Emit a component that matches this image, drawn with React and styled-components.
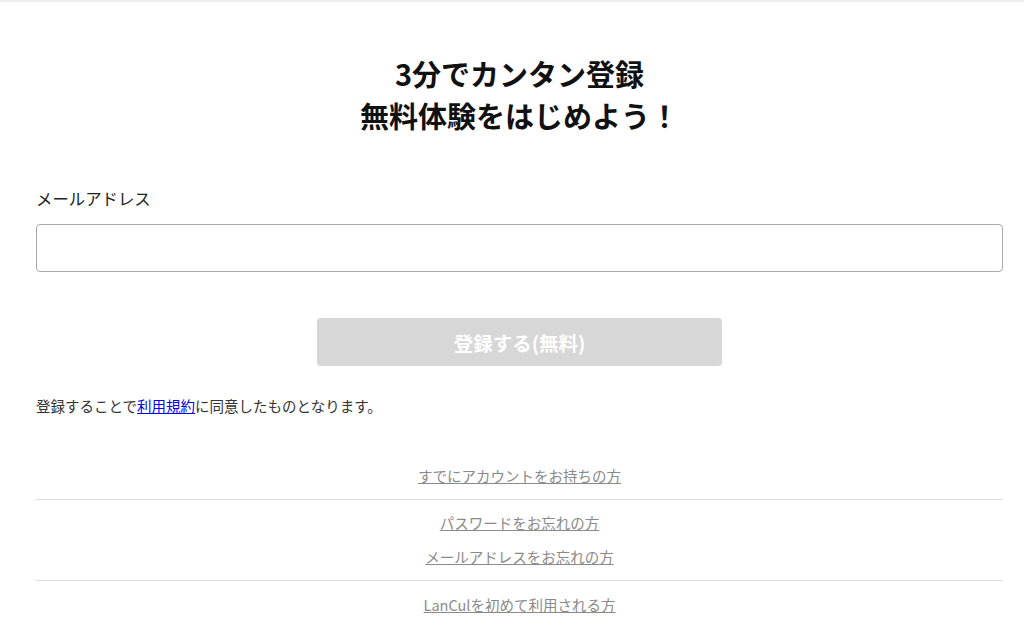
import React from 'react';
import styled, { createGlobalStyle } from 'styled-components';

const GlobalStyle = createGlobalStyle`
  * { box-sizing: border-box; }
  body {
    margin: 0;
    background: #fff;
    font-family: "Noto Sans CJK JP", "Noto Sans", sans-serif;
    color: #111;
  }
`;

const TopBar = styled.div`
  height: 2px;
  background: #ececec;
`;

const Page = styled.main`
  padding: 50px 21px 0 36px;
`;

const Title = styled.h1`
  margin: 0;
  text-align: center;
  font-size: 29px;
  line-height: 42px;
  font-weight: 700;
  color: #111;
`;

const Field = styled.div`
  margin-top: 50px;
  display: flex;
  flex-direction: column;
`;

const Label = styled.label`
  font-size: 16.4px;
  line-height: 24px;
  color: #222;
`;

const Input = styled.input`
  margin-top: 14px;
  height: 48px;
  width: 100%;
  border: 1px solid #a9a9a9;
  border-radius: 4px;
  font-size: 16px;
  padding: 0 12px;
  outline: none;
`;

const ButtonRow = styled.div`
  display: flex;
  justify-content: center;
  margin-top: 46px;
`;

const SubmitButton = styled.button`
  width: 405px;
  height: 48px;
  border: none;
  border-radius: 4px;
  background: #d7d7d7;
  color: #fff;
  font-family: inherit;
  font-size: 19.5px;
  font-weight: 700;
`;

const Terms = styled.p`
  margin: 30px 0 0;
  font-size: 14.5px;
  line-height: 20px;
  color: #333;
  a { color: #0000ee; text-decoration: underline; }
`;

const LinkGroup = styled.div`
  display: flex;
  flex-direction: column;
  align-items: center;
  gap: 12px;
  padding: ${p => p.$pad};
  border-top: ${p => (p.$divided ? '1px solid #dcdcdc' : 'none')};
`;

const SubLink = styled.a`
  font-size: 14.5px;
  line-height: 22px;
  color: #8a8a8a;
  text-decoration: underline;
`;

export default function App() {
  return (
    <>
      <GlobalStyle />
      <TopBar />
      <Page>
        <Title>
          3分でカンタン登録
          <br />
          無料体験をはじめよう！
        </Title>
        <Field>
          <Label>メールアドレス</Label>
          <Input type="email" />
        </Field>
        <ButtonRow>
          <SubmitButton disabled>登録する(無料)</SubmitButton>
        </ButtonRow>
        <Terms>
          登録することで<a href="#">利用規約</a>に同意したものとなります。
        </Terms>
        <LinkGroup $pad="49px 0 12px">
          <SubLink href="#">すでにアカウントをお持ちの方</SubLink>
        </LinkGroup>
        <LinkGroup $divided $pad="12px 0 12px">
          <SubLink href="#">パスワードをお忘れの方</SubLink>
          <SubLink href="#">メールアドレスをお忘れの方</SubLink>
        </LinkGroup>
        <LinkGroup $divided $pad="13px 0 0">
          <SubLink href="#">LanCulを初めて利用される方</SubLink>
        </LinkGroup>
      </Page>
    </>
  );
}
